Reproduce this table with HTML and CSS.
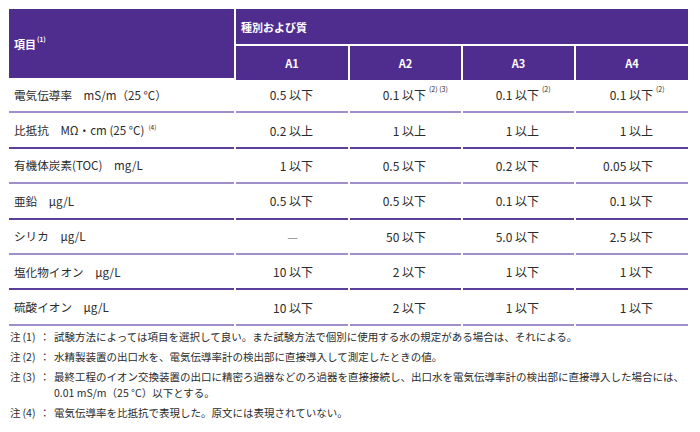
FILE: index.html
```html
<!DOCTYPE html>
<html lang="ja">
<head>
<meta charset="utf-8">
<link rel="stylesheet" href="styles.css">
</head>
<body>
<div class="page">
  <div class="table">
    <div class="hd hd-item">項目<span class="hsup">(1)</span></div>
    <div class="hd hd-group">種別および質</div>
    <div class="hd hd-col">A1</div>
    <div class="hd hd-col">A2</div>
    <div class="hd hd-col">A3</div>
    <div class="hd hd-col">A4</div>

    <div class="row r-light">
      <div class="lbl">電気伝導率　mS/m（25 °C）</div>
      <div class="val"><span class="v">0.5 以下</span></div>
      <div class="val"><span class="v">0.1 以下<span class="sup">(2) (3)</span></span></div>
      <div class="val"><span class="v">0.1 以下<span class="sup">(2)</span></span></div>
      <div class="val"><span class="v">0.1 以下<span class="sup">(2)</span></span></div>
    </div>
    <div class="row r-dark">
      <div class="lbl">比抵抗　MΩ・cm (25 °C)<span class="lsup">(4)</span></div>
      <div class="val"><span class="v">0.2 以上</span></div>
      <div class="val"><span class="v">1 以上</span></div>
      <div class="val"><span class="v">1 以上</span></div>
      <div class="val"><span class="v">1 以上</span></div>
    </div>
    <div class="row r-light">
      <div class="lbl">有機体炭素(TOC)　mg/L</div>
      <div class="val"><span class="v">1 以下</span></div>
      <div class="val"><span class="v">0.5 以下</span></div>
      <div class="val"><span class="v">0.2 以下</span></div>
      <div class="val"><span class="v">0.05 以下</span></div>
    </div>
    <div class="row r-dark">
      <div class="lbl">亜鉛　µg/L</div>
      <div class="val"><span class="v">0.5 以下</span></div>
      <div class="val"><span class="v">0.5 以下</span></div>
      <div class="val"><span class="v">0.1 以下</span></div>
      <div class="val"><span class="v">0.1 以下</span></div>
    </div>
    <div class="row r-light">
      <div class="lbl">シリカ　µg/L</div>
      <div class="val"><span class="v dash">—</span></div>
      <div class="val"><span class="v">50 以下</span></div>
      <div class="val"><span class="v">5.0 以下</span></div>
      <div class="val"><span class="v">2.5 以下</span></div>
    </div>
    <div class="row r-dark">
      <div class="lbl">塩化物イオン　µg/L</div>
      <div class="val"><span class="v">10 以下</span></div>
      <div class="val"><span class="v">2 以下</span></div>
      <div class="val"><span class="v">1 以下</span></div>
      <div class="val"><span class="v">1 以下</span></div>
    </div>
    <div class="row r-light">
      <div class="lbl">硫酸イオン　µg/L</div>
      <div class="val"><span class="v">10 以下</span></div>
      <div class="val"><span class="v">2 以下</span></div>
      <div class="val"><span class="v">1 以下</span></div>
      <div class="val"><span class="v">1 以下</span></div>
    </div>
  </div>

  <div class="notes">
    <div class="note"><span class="nk">注<span class="np">(1)</span><span class="nc">：</span></span><span class="nt">試験方法によっては項目を選択して良い。また試験方法で個別に使用する水の規定がある場合は、それによる。</span></div>
    <div class="note"><span class="nk">注<span class="np">(2)</span><span class="nc">：</span></span><span class="nt">水精製装置の出口水を、電気伝導率計の検出部に直接導入して測定したときの値。</span></div>
    <div class="note"><span class="nk">注<span class="np">(3)</span><span class="nc">：</span></span><span class="nt">最終工程のイオン交換装置の出口に精密ろ過器などのろ過器を直接接続し、出口水を電気伝導率計の検出部に直接導入した場合には、0.01 mS/m（25 °C）以下とする。</span></div>
    <div class="note"><span class="nk">注<span class="np">(4)</span><span class="nc">：</span></span><span class="nt">電気伝導率を比抵抗で表現した。原文には表現されていない。</span></div>
  </div>
</div>
</body>
</html>
```

FILE: styles.css
```css
* { box-sizing: border-box; }

html, body {
  margin: 0;
  padding: 0;
  background: #ffffff;
}

body {
  font-family: "Noto Sans CJK JP", "Noto Sans", sans-serif;
  color: #2b2b2b;
}

.page {
  padding: 9px 10px 0 9px;
}

.table {
  width: 679px;
  display: grid;
  grid-template-columns: 225px 112px 111px 111px 112px;
  grid-template-rows: 35px 34px;
  grid-auto-rows: 35.4px;
  column-gap: 2px;
}

.hd {
  background: #4f2d8f;
  color: #ffffff;
  font-weight: 700;
  font-size: 11px;
  display: flex;
  align-items: center;
}

.hd-item {
  grid-row: 1 / span 2;
  grid-column: 1;
  padding-left: 5px;
}

.hsup {
  font-size: 6.5px;
  align-self: flex-start;
  margin-top: 25px;
  margin-left: 1px;
}

.hd-group {
  grid-column: 2 / span 4;
  grid-row: 1;
  padding-left: 5px;
  margin-bottom: 2px;
  height: 35px;
}

.hd-col {
  grid-row: 2;
  justify-content: center;
  margin-top: 2px;
  height: 34px;
}

.row {
  display: contents;
}

.lbl, .val {
  display: flex;
  align-items: center;
  font-size: 12px;
  border-bottom: 2px solid #8f7cc0;
}

.r-light .lbl, .r-light .val { border-bottom-color: #a08fcb; }
.r-dark .lbl, .r-dark .val { border-bottom-color: #5b3f9a; }

.lbl {
  padding-left: 5px;
  font-size: 11.6px;
  white-space: pre;
}

.lsup {
  font-size: 6.5px;
  align-self: flex-start;
  margin-top: 9px;
  margin-left: 4px;
}

.val {
  justify-content: flex-end;
  padding-right: 35px;
}

.v {
  position: relative;
  white-space: nowrap;
}

.v.dash {
  color: #8a8a8a;
  margin-right: 15px;
}

.sup {
  position: absolute;
  left: 100%;
  top: -2px;
  margin-left: 3px;
  font-size: 7px;
  white-space: nowrap;
}

.notes {
  margin-top: 3px;
  font-size: 10.5px;
  line-height: 16px;
  color: #2b2b2b;
}

.note {
  display: flex;
  margin-bottom: 4px;
}

.nk {
  flex: none;
  width: 45px;
  padding-left: 1px;
  white-space: nowrap;
}

.np {
  margin-left: 2px;
}

.nc {
  margin-left: 4px;
}

.nt {
  flex: 1;
}
```
